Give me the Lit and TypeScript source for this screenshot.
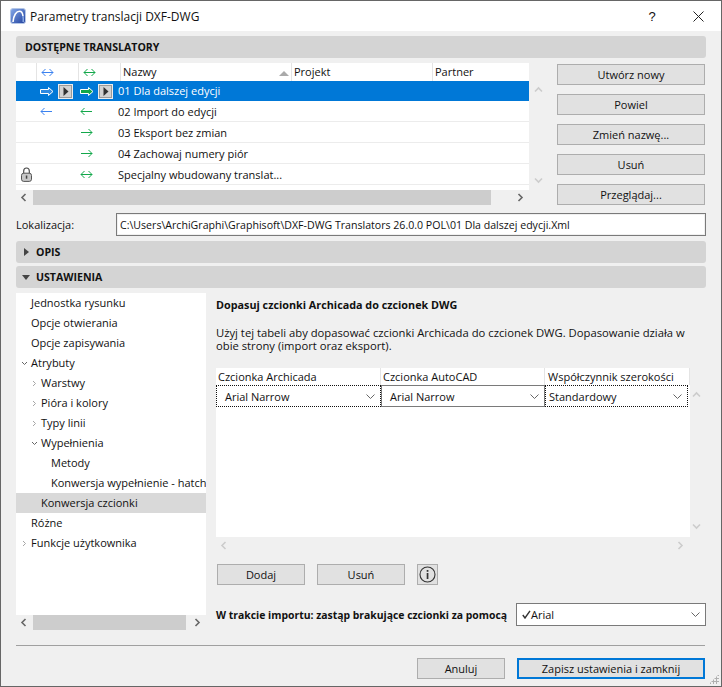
import { LitElement, html, css } from "lit";
import { customElement } from "lit/decorators.js";

const BLUE = "#3b82f0";
const GREEN = "#12a84a";

function arrow(kind: "both" | "left" | "right", color: string) {
  const p =
    kind === "both"
      ? "M1 5.5H12M4.5 2 L1 5.5 L4.5 9M8.5 2 L12 5.5 L8.5 9"
      : kind === "left"
      ? "M1 5.5H12M4.5 2 L1 5.5 L4.5 9"
      : "M1 5.5H12M8.5 2 L12 5.5 L8.5 9";
  return html`<svg class="ic" width="13" height="11" viewBox="0 0 13 11"><path d="${p}" stroke="${color}" fill="none"/></svg>`;
}

function fat(color: string) {
  return html`<svg class="ic" width="14" height="11" viewBox="0 0 14 11">
    <path d="M.5 3.5H8.5V1.5L13 5.5L8.5 9.5V7.5H.5Z" fill="${color}" stroke="#fff" stroke-linejoin="round"/>
  </svg>`;
}

const chevDown = html`<svg class="ic" width="9" height="5" viewBox="0 0 9 5"><path d="M.5 .5 L4.5 4.5 L8.5 .5" stroke="#666" fill="none"/></svg>`;

function chev(dir: "l" | "r" | "u" | "d", color: string) {
  const p = { l: "M5.5 1 L2 4.5 L5.5 8", r: "M2.5 1 L6 4.5 L2.5 8", u: "M1 5.5 L4.5 2 L8 5.5", d: "M1 2.5 L4.5 6 L8 2.5" }[dir];
  return html`<svg class="ic" width="9" height="9" viewBox="0 0 9 9"><path d="${p}" stroke="${color}" stroke-width="1.6" fill="none"/></svg>`;
}

function treeChev(open: boolean) {
  return open
    ? html`<svg class="ic" width="7" height="5" viewBox="0 0 7 5"><path d="M1 1 L3.5 3.5 L6 1" stroke="#666" fill="none"/></svg>`
    : html`<svg class="ic" width="5" height="7" viewBox="0 0 5 7"><path d="M1 1 L3.5 3.5 L1 6" stroke="#a6a6a6" fill="none"/></svg>`;
}

const playBtn = html`<span class="play"><svg width="6" height="9" viewBox="0 0 6 9"><path d="M.5 0 L5.5 4.5 L.5 9Z" fill="#333"/></svg></span>`;

const lock = html`<svg class="ic" width="11" height="15" viewBox="0 0 11 15">
  <path d="M2.7 7V4C2.7 2.3 3.9 1 5.5 1S8.3 2.3 8.3 4V7" stroke="#444" stroke-width="1.1" fill="none"/>
  <rect x=".5" y="6.2" width="10" height="8.2" rx="2.2" fill="#c9c9c9" stroke="#555"/>
  <rect x="4.8" y="8.5" width="1.5" height="3.2" fill="#444"/>
</svg>`;

const logo = html`<svg class="ic" width="16" height="16" viewBox="0 0 16 16">
  <defs><linearGradient id="lg" x1="0" y1="0" x2="1" y2="1"><stop offset="0" stop-color="#86aaea"/><stop offset="1" stop-color="#1f3f9c"/></linearGradient></defs>
  <rect x=".5" y=".5" width="15" height="15" rx="2.5" fill="url(#lg)" stroke="#b4c6e6"/>
  <path d="M3 14 C3.5 7 6.5 3.2 9.5 3.2 C11.5 3.2 12.6 5 13 8" stroke="#fff" stroke-width="1.6" fill="none"/>
  <path d="M13 8 C13.3 10 13.3 12 13.2 14" stroke="#8fb0ea" stroke-width="1.4" fill="none"/>
</svg>`;

const rows = [
  { sel: true, a: fat("#2f8ae0"), b: fat(GREEN), name: "01 Dla dalszej edycji" },
  { a: arrow("left", BLUE), b: arrow("left", GREEN), name: "02 Import do edycji" },
  { b: arrow("right", GREEN), name: "03 Eksport bez zmian" },
  { b: arrow("right", GREEN), name: "04 Zachowaj numery piór" },
  { lock: true, b: arrow("both", GREEN), name: "Specjalny wbudowany translat..." },
];

const tree: { t: string; lvl: number; ch?: "o" | "c"; sel?: boolean }[] = [
  { t: "Jednostka rysunku", lvl: 0 },
  { t: "Opcje otwierania", lvl: 0 },
  { t: "Opcje zapisywania", lvl: 0 },
  { t: "Atrybuty", lvl: 0, ch: "o" },
  { t: "Warstwy", lvl: 1, ch: "c" },
  { t: "Pióra i kolory", lvl: 1, ch: "c" },
  { t: "Typy linii", lvl: 1, ch: "c" },
  { t: "Wypełnienia", lvl: 1, ch: "o" },
  { t: "Metody", lvl: 2 },
  { t: "Konwersja wypełnienie - hatch", lvl: 2 },
  { t: "Konwersja czcionki", lvl: 1, sel: true },
  { t: "Różne", lvl: 0 },
  { t: "Funkcje użytkownika", lvl: 0, ch: "c" },
];

@customElement("app-root")
export class AppRoot extends LitElement {
  static styles = css`
    :host { display: block; width: 722px; height: 687px; font-family: "Open Sans", "Noto Sans", sans-serif; font-size: 11px; color: #111; }
    * { box-sizing: border-box; }
    .ic { display: block; flex: none; }
    .win { width: 722px; height: 687px; border: 1px solid #666; background: #f0f0f0; display: flex; flex-direction: column; position: relative; }
    .title { height: 30px; background: #fff; display: flex; align-items: center; padding-left: 9px; font-size: 12px; flex: none; }
    .title .t { flex: 1; margin-left: 4px; }
    .help { width: 46px; text-align: center; font-size: 13px; font-family: "Liberation Sans", sans-serif; }
    .close { width: 46px; display: flex; justify-content: center; }
    .body { flex: 1; padding: 5px 15px 0; display: flex; flex-direction: column; }
    .bar { height: 22px; background: #d4d4d4; border-radius: 3px; display: flex; align-items: center; padding-left: 9px; font-weight: 700; font-size: 10.6px; flex: none; width: 690px; }
    .bar.op { margin-top: 5px; padding-left: 8px; gap: 7px; }
    .bar.us { margin-top: 3px; padding-left: 6px; gap: 6px; }
    .top { display: flex; margin-top: 5px; height: 142px; }
    .list { width: 513px; display: flex; flex-direction: column; }
    .lhead { height: 18px; background: #fff; display: grid; grid-template-columns: 20px 42px 42px 171px 141px 1fr; align-items: center; }
    .lhead > div { height: 100%; border-left: 1px solid #e4e4e4; display: flex; align-items: center; padding: 0 0 2px 2px; position: relative; }
    .lhead > div:first-child { border-left: none; }
    .lhead > div.ac { padding: 0 0 0 4px; }
    .sort { position: absolute; right: 2px; top: 8px; width: 0; height: 0; border-left: 5px solid transparent; border-right: 5px solid transparent; border-bottom: 5px solid #aaa; }
    .row { height: 21px; background: #fff; border-bottom: 1px solid #ececec; display: flex; align-items: center; }
    .row.sel { height: 20px; background: #0078d7; color: #fff; border-bottom: none; }
    .col-lock { width: 24px; flex: none; padding-left: 5px; }
    .col-a { width: 40px; flex: none; display: flex; align-items: center; gap: 4px; }
    .col-b { width: 38px; flex: none; display: flex; align-items: center; gap: 4px; }
    .nm { white-space: nowrap; }
    .row.sel .nm { padding-bottom: 1px; }
    .play { width: 15px; height: 15px; background: #d2d2d2; border: 1px solid #ececec; box-shadow: inset 0 0 0 1px #9a9a9a; display: flex; align-items: center; justify-content: center; flex: none; }
    .fill { height: 5px; background: #fff; flex: none; }
    .sb { height: 15px; display: flex; align-items: center; flex: none; }
    .sb .th { background: #cdcdcd; height: 15px; }
    .sb .arr { width: 17px; display: flex; justify-content: center; flex: none; }
    .sb .sp { flex: 1; }
    .vs { width: 28px; flex: none; height: 127px; display: flex; flex-direction: column; align-items: flex-start; justify-content: space-between; padding: 23px 0 5px 5px; }
    .btns { width: 148px; display: flex; flex-direction: column; gap: 9px; padding-top: 1px; }
    .btn { height: 21px; border: 1px solid #adadad; background: #e1e1e1; display: flex; align-items: center; justify-content: center; flex: none; white-space: nowrap; }
    .loc { display: flex; align-items: center; height: 23px; margin-top: 8px; }
    .loc .lb { width: 100px; }
    .loc .f { width: 590px; height: 23px; background: #fff; border: 1px solid #7a7a7a; box-shadow: inset 0 0 0 1px #f0f0f0; display: flex; align-items: center; padding-left: 3px; font-size: 10.6px; white-space: nowrap; overflow: hidden; }
    .main { display: flex; margin-top: 5px; }
    .left { width: 190px; flex: none; }
    .tree { height: 322px; background: #fff; }
    .ti { height: 20px; display: flex; align-items: center; position: relative; white-space: nowrap; overflow: hidden; padding-bottom: 2px; }
    .ti.sel { background: #d9d9d9; }
    .tc { position: absolute; display: flex; align-items: center; justify-content: center; width: 7px; height: 20px; top: 0; }
    .right { margin-left: 10px; width: 490px; display: flex; flex-direction: column; }
    .h3 { font-weight: 700; font-size: 10.8px; height: 22px; display: flex; align-items: center; flex: none; }
    .desc { margin: 11px 0 0; line-height: 13px; height: 31px; font-size: 11.25px; width: 475px; flex: none; white-space: nowrap; }
    .tblwrap { display: flex; margin-top: 11px; flex: none; }
    .tbl { width: 474px; height: 169px; background: #fff; display: flex; flex-direction: column; }
    .thead { display: grid; grid-template-columns: 165px 164px 145px; height: 17px; align-items: center; }
    .thead > div { padding: 0 0 0 2px; height: 100%; display: flex; align-items: center; white-space: nowrap; border-right: 1px solid #e4e4e4; }
    .thead > div:last-child { padding-left: 3px; }
    .tcomb { display: grid; grid-template-columns: 165px 164px 143px; }
    .combo { height: 22px; border: 1px solid #7a7a7a; display: flex; align-items: center; padding: 0 5px 0 8px; justify-content: space-between; background: #fff; }
    .combo.f { border: 1px dotted #111; }
    .combo.n { padding-left: 3px; }
    .vs2 { width: 16px; display: flex; flex-direction: column; justify-content: space-between; align-items: flex-start; padding: 23px 0 6px 2px; height: 169px; }
    .hs { width: 474px; height: 16px; display: flex; align-items: center; justify-content: space-between; padding: 0 5px 0 4px; flex: none; }
    .acts { display: flex; margin-top: 11px; gap: 12px; margin-left: 1px; }
    .btn.w88 { width: 88px; }
    .btn.ib { width: 21px; }
    .imp { display: flex; align-items: center; margin-top: 18px; height: 23px; white-space: nowrap; }
    .imp .l { font-weight: 700; font-size: 10.4px; width: 300px; }
    .imp .combo { width: 190px; height: 23px; padding-left: 5px; padding-right: 5px; }
    .chk { display: flex; align-items: center; }
    .hr { height: 1px; background: #a0a0a0; width: 689px; margin-top: 15px; flex: none; }
    .foot { display: flex; justify-content: flex-end; gap: 12px; margin-top: 12px; width: 689px; }
    .btn.pri { width: 188px; border: 2px solid #0078d7; }
    .grip { position: absolute; right: 2px; bottom: 2px; width: 10px; height: 10px; background-image: radial-gradient(#b0b0b0 1px, transparent 1.2px); background-size: 3px 3px; clip-path: polygon(100% 0, 100% 100%, 0 100%); }
  `;

  render() {
    return html`<div class="win">
      <div class="title">${logo}<span class="t">Parametry translacji DXF-DWG</span>
        <span class="help">?</span>
        <span class="close"><svg width="11" height="11" viewBox="0 0 11 11"><path d="M.5 .5L10.5 10.5M10.5 .5L.5 10.5" stroke="#222" fill="none"/></svg></span>
      </div>
      <div class="body">
        <div class="bar">DOSTĘPNE TRANSLATORY</div>
        <div class="top">
          <div class="list">
            <div class="lhead">
              <div></div>
              <div class="ac">${arrow("both", BLUE)}</div>
              <div class="ac">${arrow("both", GREEN)}</div>
              <div>Nazwy<span class="sort"></span></div>
              <div>Projekt</div>
              <div>Partner</div>
            </div>
            ${rows.map(
              (r) => html`<div class="row ${r.sel ? "sel" : ""}">
                <span class="col-lock">${r.lock ? lock : ""}</span>
                <span class="col-a">${r.a ?? ""}${r.sel ? playBtn : ""}</span>
                <span class="col-b">${r.b ?? ""}${r.sel ? playBtn : ""}</span>
                <span class="nm">${r.name}</span>
              </div>`
            )}
            <div class="fill"></div>
            <div class="sb">
              <span class="arr">${chev("l", "#666")}</span>
              <span class="th" style="width:458px"></span>
              <span class="sp"></span>
              <span class="arr">${chev("r", "#666")}</span>
            </div>
          </div>
          <div class="vs">${chev("u", "#ccc")}${chev("d", "#ccc")}</div>
          <div class="btns">
            ${["Utwórz nowy", "Powiel", "Zmień nazwę...", "Usuń", "Przeglądaj..."].map((b) => html`<div class="btn">${b}</div>`)}
          </div>
        </div>
        <div class="loc"><span class="lb">Lokalizacja:</span><div class="f">C:\\Users\\ArchiGraphi\\Graphisoft\\DXF-DWG Translators 26.0.0 POL\\01 Dla dalszej edycji.Xml</div></div>
        <div class="bar op">
          <svg class="ic" width="5" height="8" viewBox="0 0 5 8"><path d="M0 0L5 4L0 8Z" fill="#444"/></svg>OPIS</div>
        <div class="bar us">
          <svg class="ic" width="8" height="5" viewBox="0 0 8 5"><path d="M0 0H8L4 5Z" fill="#444"/></svg>USTAWIENIA</div>
        <div class="main">
          <div class="left">
            <div class="tree">
              ${tree.map(
                (t) => html`<div class="ti ${t.sel ? "sel" : ""}" style="padding-left:${15 + t.lvl * 10}px">
                  ${t.ch ? html`<span class="tc" style="left:${5 + t.lvl * 10}px">${treeChev(t.ch === "o")}</span>` : ""}
                  ${t.t}
                </div>`
              )}
            </div>
            <div class="sb">
              <span class="arr">${chev("l", "#666")}</span>
              <span class="th" style="width:153px"></span>
              <span class="sp"></span>
              <span class="arr">${chev("r", "#666")}</span>
            </div>
          </div>
          <div class="right">
            <div class="h3">Dopasuj czcionki Archicada do czcionek DWG</div>
            <p class="desc">Użyj tej tabeli aby dopasować czcionki Archicada do czcionek DWG. Dopasowanie działa w<br />obie strony (import oraz eksport).</p>
            <div class="tblwrap">
              <div class="tbl">
                <div class="thead"><div>Czcionka Archicada</div><div>Czcionka AutoCAD</div><div>Współczynnik szerokości</div></div>
                <div class="tcomb">
                  <div class="combo f"><span>Arial Narrow</span>${chevDown}</div>
                  <div class="combo"><span>Arial Narrow</span>${chevDown}</div>
                  <div class="combo f n"><span>Standardowy</span>${chevDown}</div>
                </div>
              </div>
              <div class="vs2">${chev("u", "#ccc")}${chev("d", "#ccc")}</div>
            </div>
            <div class="hs">${chev("l", "#ccc")}${chev("r", "#ccc")}</div>
            <div class="acts">
              <div class="btn w88">Dodaj</div>
              <div class="btn w88">Usuń</div>
              <div class="btn ib"><svg width="17" height="17" viewBox="0 0 17 17"><circle cx="8.5" cy="8.5" r="7.5" stroke="#333" fill="none" stroke-width="1.1"/><rect x="7.7" y="7" width="1.7" height="6" fill="#333"/><rect x="7.7" y="4" width="1.7" height="1.8" fill="#333"/></svg></div>
            </div>
            <div class="imp"><span class="l">W trakcie importu: zastąp brakujące czcionki za pomocą</span>
              <div class="combo"><span class="chk"><svg class="ic" width="9" height="9" viewBox="0 0 9 9"><path d="M.8 5L3 8L8 .8" stroke="#333" stroke-width="1.4" fill="none"/></svg>Arial</span>${chevDown}</div>
            </div>
          </div>
        </div>
        <div class="hr"></div>
        <div class="foot"><div class="btn w88">Anuluj</div><div class="btn pri">Zapisz ustawienia i zamknij</div></div>
      </div>
      <div class="grip"></div>
    </div>`;
  }
}
